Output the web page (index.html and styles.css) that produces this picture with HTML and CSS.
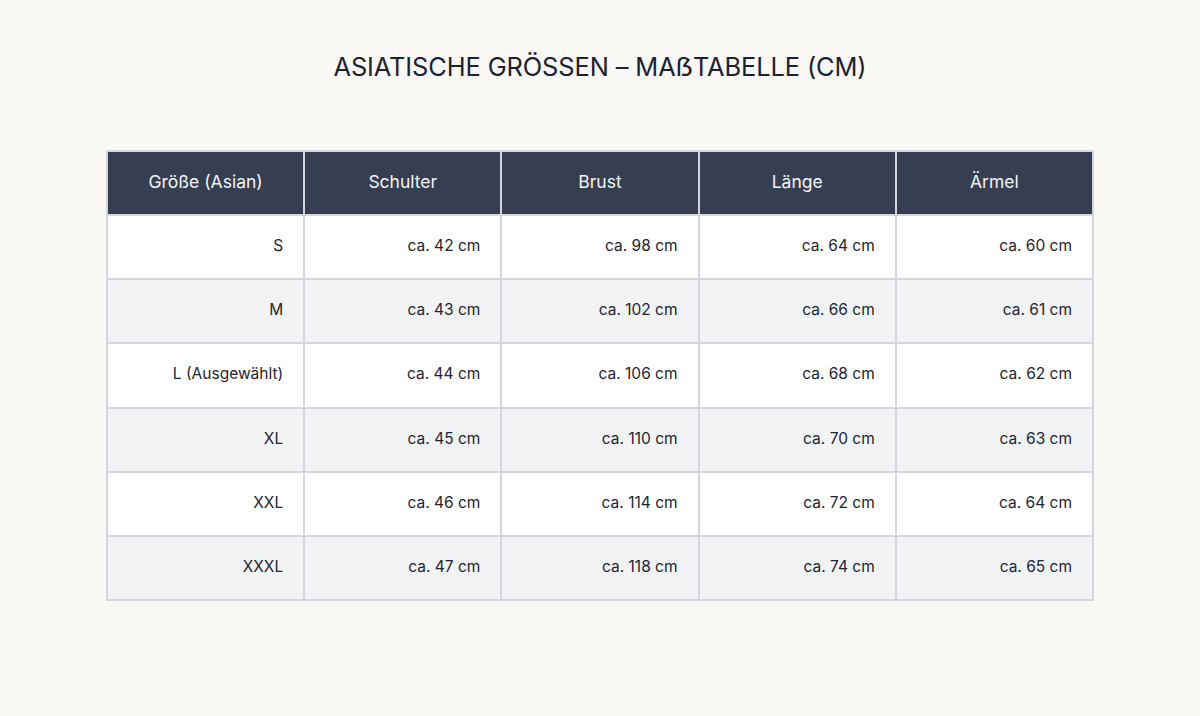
FILE: index.html
```html
<!DOCTYPE html>
<html lang="de">
<head>
<meta charset="utf-8">
<link rel="stylesheet" href="styles.css">
</head>
<body>
<main class="page">
  <h1 class="title">ASIATISCHE GRÖSSEN – MAẞTABELLE (CM)</h1>
  <table class="sizes">
    <thead>
      <tr><th>Größe (Asian)</th><th>Schulter</th><th>Brust</th><th>Länge</th><th>Ärmel</th></tr>
    </thead>
    <tbody>
      <tr><td>S</td><td>ca. 42 cm</td><td>ca. 98 cm</td><td>ca. 64 cm</td><td>ca. 60 cm</td></tr>
      <tr><td>M</td><td>ca. 43 cm</td><td>ca. 102 cm</td><td>ca. 66 cm</td><td>ca. 61 cm</td></tr>
      <tr><td>L (Ausgewählt)</td><td>ca. 44 cm</td><td>ca. 106 cm</td><td>ca. 68 cm</td><td>ca. 62 cm</td></tr>
      <tr><td>XL</td><td>ca. 45 cm</td><td>ca. 110 cm</td><td>ca. 70 cm</td><td>ca. 63 cm</td></tr>
      <tr><td>XXL</td><td>ca. 46 cm</td><td>ca. 114 cm</td><td>ca. 72 cm</td><td>ca. 64 cm</td></tr>
      <tr><td>XXXL</td><td>ca. 47 cm</td><td>ca. 118 cm</td><td>ca. 74 cm</td><td>ca. 65 cm</td></tr>
    </tbody>
  </table>
</main>
</body>
</html>
```
FILE: styles.css
```css
html, body {
  margin: 0;
  padding: 0;
  background: #f9f8f4;
  height: 100%;
}
body {
  font-family: Inter, "Open Sans", sans-serif;
  color: #1f2430;
}
.page {
  width: 988px;
  margin: 0 auto;
  padding-top: 50px;
}
.title {
  margin: 0 0 66px;
  text-align: center;
  font-weight: 400;
  font-size: 25.4px;
  line-height: 34px;
  letter-spacing: -0.1px;
  color: #1c2233;
}
.sizes {
  width: 988px;
  border-collapse: collapse;
  table-layout: fixed;
  border: 2px solid #d3d6de;
  font-size: 15.5px;
}
.sizes th, .sizes td {
  border: 2px solid #d3d6de;
  height: 59.2px;
  padding: 0 20px 3px;
}
.sizes th {
  height: 59px;
  background: #363f52;
  color: #f3f4f6;
  font-weight: 400;
  font-size: 17.5px;
  text-align: center;
}
.sizes td {
  text-align: right;
  background: #ffffff;
}
.sizes tbody tr:nth-child(even) td {
  background: #f2f3f5;
}
```
